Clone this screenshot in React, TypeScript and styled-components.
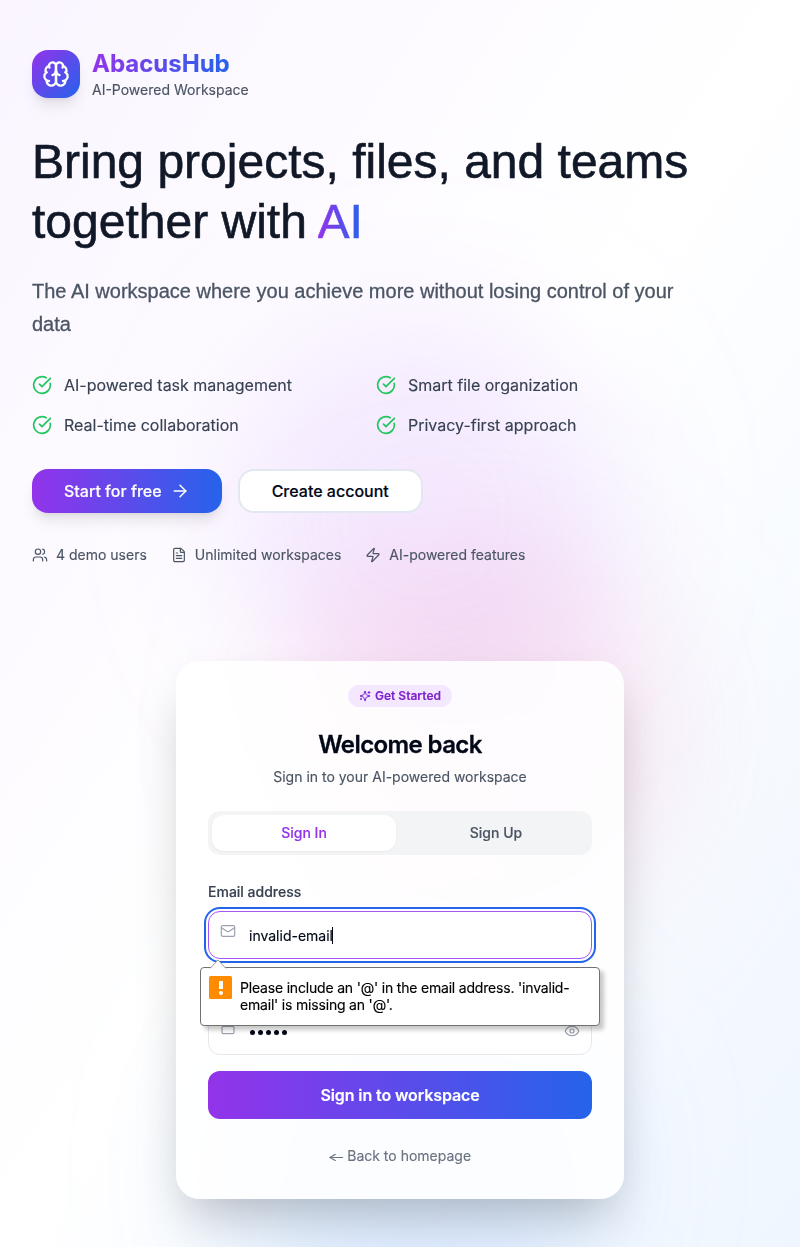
import React from "react";
import styled, { createGlobalStyle, css } from "styled-components";
import { ArrowRight, CircleCheckBig, Eye, FileText, Lock, Mail, Users, Zap } from "lucide-react";

const GlobalStyle = createGlobalStyle`
  *, *::before, *::after { box-sizing: border-box; }
  body {
    margin: 0;
    font-family: Inter, "Liberation Sans", sans-serif;
    color: #020817;
    -webkit-font-smoothing: antialiased;
    -webkit-text-stroke: 0.15px;
  }
  h1, h2, p, ul { margin: 0; padding: 0; }
  button { font: inherit; color: inherit; border: 0; background: none; padding: 0; }
  svg { flex-shrink: 0; display: block; }
`;

const brandGradient = "#9333ea, #2563eb";

const Page = styled.div`
  position: relative;
  isolation: isolate;
  overflow: hidden;
  min-height: 1247px;
  padding: 50px 32px 48px;
  background: linear-gradient(to bottom right, #faf5ff, #ffffff 50%, #eff6ff);
`;

const Glow = styled.div<{ $x: number; $y: number; $color: string; $opacity?: number }>`
  position: absolute;
  z-index: -1;
  left: ${(p) => p.$x}px;
  top: ${(p) => p.$y}px;
  width: 384px;
  height: 384px;
  border-radius: 50%;
  background: ${(p) => p.$color};
  opacity: ${(p) => p.$opacity ?? 0.2};
  filter: blur(64px);
  mix-blend-mode: multiply;
`;

const Brand = styled.div`
  display: flex;
  align-items: center;
  gap: 12px;
  height: 48px;
`;

const BrandMark = styled.div`
  display: grid;
  place-items: center;
  width: 48px;
  height: 48px;
  border-radius: 16px;
  color: #fff;
  background: linear-gradient(to bottom right, ${brandGradient});
  box-shadow: 0 10px 15px -3px rgba(0, 0, 0, 0.1), 0 4px 6px -4px rgba(0, 0, 0, 0.1);
`;

const GradientText = styled.span`
  color: transparent;
  background: linear-gradient(to right, ${brandGradient});
  background-clip: text;
  -webkit-background-clip: text;
`;

const BrandName = styled(GradientText)`
  display: block;
  width: max-content;
  font-size: 24px;
  line-height: 32px;
  font-weight: 700;
`;

const BrandTag = styled.p`
  font-size: 14px;
  line-height: 20px;
  color: #4b5563;
`;

const Headline = styled.h1`
  margin-top: 34px;
  font-family: "Liberation Sans", sans-serif;
  font-size: 48px;
  line-height: 60px;
  font-weight: 400;
  color: #111827;
  -webkit-text-stroke: 0.6px;
`;

const Lead = styled.p`
  margin-top: 23px;
  font-family: "Liberation Sans", sans-serif;
  font-size: 20px;
  line-height: 32.5px;
  color: #4b5563;
  -webkit-text-stroke: 0.3px;
`;

const Features = styled.div`
  display: grid;
  grid-template-columns: 1fr 1fr;
  gap: 16px;
  margin-top: 33px;
  padding-right: 64px;
`;

const Feature = styled.div`
  display: flex;
  align-items: center;
  gap: 12px;
  font-size: 16px;
  line-height: 24px;
  color: #374151;
  svg { color: #22c55e; }
`;

const Actions = styled.div`
  display: flex;
  gap: 16px;
  margin-top: 32px;
`;

const ActionButton = styled.button<{ $primary?: boolean }>`
  display: flex;
  align-items: center;
  gap: 8px;
  height: 44px;
  padding: 0 32px;
  border-radius: 16px;
  font-size: 16px;
  font-weight: 500;
  ${(p) =>
    p.$primary
      ? css`
          color: #fff;
          background: linear-gradient(to right, ${brandGradient});
          box-shadow: 0 10px 15px -3px rgba(0, 0, 0, 0.1), 0 4px 6px -4px rgba(0, 0, 0, 0.1);
        `
      : css`
          background: #fff;
          border: 2px solid #e2e8f0;
        `}
`;

const Stats = styled.div`
  display: flex;
  gap: 24px;
  margin-top: 32px;
`;

const Stat = styled.div`
  display: flex;
  align-items: center;
  gap: 8px;
  font-size: 14px;
  line-height: 20px;
  color: #4b5563;
`;

const Card = styled.section`
  width: 448px;
  height: 538px;
  margin: 96px auto 0;
  padding: 24px 32px;
  border-radius: 24px;
  background: rgba(255, 255, 255, 0.87);
  box-shadow: 0 25px 50px -12px rgba(0, 0, 0, 0.25);
  backdrop-filter: blur(4px);
  display: flex;
  flex-direction: column;
`;

const Badge = styled.span`
  display: flex;
  align-items: center;
  align-self: center;
  gap: 4px;
  height: 22px;
  padding: 0 11px;
  border-radius: 11px;
  font-size: 12px;
  line-height: 16px;
  font-weight: 600;
  color: #7e22ce;
  background: #f3e8ff;
  span { margin-top: -1px; }
`;

const CardTitle = styled.h2`
  margin-top: 22px;
  font-size: 24px;
  line-height: 32px;
  font-weight: 600;
  letter-spacing: -0.6px;
  text-align: center;
  -webkit-text-stroke: 0.3px;
`;

const CardSubtitle = styled.p`
  margin-top: 6px;
  font-size: 14px;
  line-height: 20px;
  text-align: center;
  color: #4b5563;
`;

const Tabs = styled.div`
  display: flex;
  gap: 8px;
  height: 44px;
  margin-top: 24px;
  padding: 4px;
  border-radius: 12px;
  background: #f3f4f6;
`;

const Tab = styled.button<{ $active?: boolean }>`
  flex: 1;
  border-radius: 12px;
  font-size: 14px;
  line-height: 20px;
  font-weight: 500;
  color: ${(p) => (p.$active ? "#9333ea" : "#4b5563")};
  background: ${(p) => (p.$active ? "#fff" : "transparent")};
  box-shadow: ${(p) => (p.$active ? "0 1px 2px rgba(0, 0, 0, 0.05)" : "none")};
`;

const Label = styled.div`
  margin-top: 27px;
  font-size: 14px;
  line-height: 20px;
  font-weight: 500;
  color: #374151;
`;

const Field = styled.div<{ $focused?: boolean }>`
  position: relative;
  display: flex;
  align-items: center;
  gap: 13px;
  height: 48px;
  padding: 0 11px;
  border: 1px solid ${(p) => (p.$focused ? "#a855f7" : "#e5e7eb")};
  border-radius: 12px;
  background: #fff;
  font-size: 14px;
  outline: ${(p) => (p.$focused ? "2px solid #2563eb" : "none")};
  outline-offset: 2px;
  & > svg { color: #9ca3af; align-self: flex-start; margin-top: 11px; }
`;

const EmailField = styled(Field)`
  margin-top: 9px;
`;

const PasswordField = styled(Field)`
  margin-top: 48px;
  & > svg:last-child { margin-left: auto; margin-top: 15px; }
`;

const Typed = styled.span`
  display: flex;
  align-items: center;
  line-height: 20px;
  padding-top: 1px;
`;

const Caret = styled.i`
  width: 1px;
  height: 17px;
  margin-left: -1px;
  background: #020817;
`;

const Dots = styled.span`
  display: flex;
  gap: 3px;
  padding: 3px 0 0 1px;
`;

const Dot = styled.i`
  width: 5px;
  height: 5px;
  border-radius: 50%;
  background: #020817;
`;

const Bubble = styled.div`
  position: absolute;
  z-index: 2;
  left: -9px;
  top: 55px;
  width: 400px;
  height: 59px;
  display: flex;
  gap: 8px;
  padding: 8px;
  border: 1px solid #6f726f;
  border-radius: 4px;
  background: #fff;
  box-shadow: 4px 4px 4px rgba(0, 0, 0, 0.22);
  font-size: 14px;
  line-height: 17px;
  letter-spacing: -0.19px;
  color: #000;
  & > svg { position: absolute; left: 8px; top: -9px; }
  p { padding-top: 3px; white-space: nowrap; }
`;

const Warning = styled.div`
  display: flex;
  flex-direction: column;
  align-items: center;
  justify-content: center;
  gap: 2px;
  width: 23px;
  height: 23px;
  border-radius: 1.5px;
  background: #ff8c00;
  &::before { content: ""; width: 4px; height: 8px; background: #fff; }
  &::after { content: ""; width: 4px; height: 4px; border-radius: 50%; background: #fff; }
`;

const Submit = styled.button`
  height: 48px;
  margin-top: 16px;
  flex-shrink: 0;
  border-radius: 12px;
  font-size: 16px;
  font-weight: 600;
  letter-spacing: -0.1px;
  color: #fff;
  background: linear-gradient(to right, ${brandGradient});
`;

const BackLink = styled.button`
  margin-top: 27px;
  padding-right: 2px;
  font-size: 14px;
  line-height: 20px;
  text-align: center;
  color: #6b7280;
`;

const BackArrow = styled.span`
  display: inline-block;
  margin-right: 3px;
  transform: translateY(1px) scale(1.38, 0.8);
  transform-origin: left center;
`;

const BrainIcon = () => (
  <svg width="28" height="28" viewBox="0 0 24 24" fill="none" stroke="currentColor" strokeWidth="2" strokeLinecap="round" strokeLinejoin="round">
    <path d="M12 5a3 3 0 1 0-5.997.125 4 4 0 0 0-2.526 5.77 4 4 0 0 0 .556 6.588A4 4 0 1 0 12 18Z" />
    <path d="M12 5a3 3 0 1 1 5.997.125 4 4 0 0 1 2.526 5.77 4 4 0 0 1-.556 6.588A4 4 0 1 1 12 18Z" />
    <path d="M15 13a4.5 4.5 0 0 1-3-4 4.5 4.5 0 0 1-3 4" />
    <path d="M17.599 6.5a3 3 0 0 0 .399-1.375M6.003 5.125A3 3 0 0 0 6.401 6.5" />
    <path d="M3.477 10.896a4 4 0 0 1 .585-.396M19.938 10.5a4 4 0 0 1 .585.396" />
    <path d="M6 18a4 4 0 0 1-1.967-.516M19.967 17.484A4 4 0 0 1 18 18" />
  </svg>
);

const SparklesIcon = () => (
  <svg width="12" height="12" viewBox="0 0 24 24" fill="none" stroke="currentColor" strokeWidth="2" strokeLinecap="round" strokeLinejoin="round">
    <path d="M9.937 15.5A2 2 0 0 0 8.5 14.063l-6.135-1.582a.5.5 0 0 1 0-.962L8.5 9.936A2 2 0 0 0 9.937 8.5l1.582-6.135a.5.5 0 0 1 .963 0L14.063 8.5A2 2 0 0 0 15.5 9.937l6.135 1.581a.5.5 0 0 1 0 .964L15.5 14.063a2 2 0 0 0-1.437 1.437l-1.582 6.135a.5.5 0 0 1-.963 0z" />
    <path d="M20 3v4M22 5h-4M4 17v2M5 18H3" />
  </svg>
);

const features = [
  "AI-powered task management",
  "Smart file organization",
  "Real-time collaboration",
  "Privacy-first approach",
];

export default function App() {
  return (
    <>
      <GlobalStyle />
      <Page>
        <Glow $x={232} $y={322} $color="#c084fc" $opacity={0.16} />
        <Glow $x={286} $y={540} $color="#f472b6" $opacity={0.16} />
        <Glow $x={216} $y={980} $color="#60a5fa" $opacity={0.16} />

        <Brand>
          <BrandMark><BrainIcon /></BrandMark>
          <div>
            <BrandName>AbacusHub</BrandName>
            <BrandTag>AI-Powered Workspace</BrandTag>
          </div>
        </Brand>
        <Headline>
          Bring projects, files, and teams<br />
          together with <GradientText>AI</GradientText>
        </Headline>
        <Lead>
          The AI workspace where you achieve more without losing control of your<br />
          data
        </Lead>
        <Features>
          {features.map((text) => (
            <Feature key={text}><CircleCheckBig size={20} />{text}</Feature>
          ))}
        </Features>
        <Actions>
          <ActionButton $primary>Start for free <ArrowRight size={20} strokeWidth={1.8} /></ActionButton>
          <ActionButton>Create account</ActionButton>
        </Actions>
        <Stats>
          <Stat><Users size={16} strokeWidth={1.8} />4 demo users</Stat>
          <Stat><FileText size={16} strokeWidth={1.8} />Unlimited workspaces</Stat>
          <Stat><Zap size={16} strokeWidth={1.8} />AI-powered features</Stat>
        </Stats>

        <Card>
          <Badge><SparklesIcon /><span>Get Started</span></Badge>
          <CardTitle>Welcome back</CardTitle>
          <CardSubtitle>Sign in to your AI-powered workspace</CardSubtitle>
          <Tabs>
            <Tab $active>Sign In</Tab>
            <Tab>Sign Up</Tab>
          </Tabs>
          <Label>Email address</Label>
          <EmailField $focused>
            <Mail size={16} strokeWidth={1.8} />
            <Typed>invalid-email<Caret /></Typed>
            <Bubble role="alert">
              <svg width="18" height="10" viewBox="0 0 18 10">
                <path d="M1 9.5 9 1l8 8.5" fill="#fff" stroke="#9a9a9a" />
                <path d="M1 10h16" stroke="#fff" />
              </svg>
              <Warning />
              <p>
                Please include an '@' in the email address. 'invalid-<br />
                email' is missing an '@'.
              </p>
            </Bubble>
          </EmailField>
          <PasswordField>
            <Lock size={16} strokeWidth={1.8} />
            <Dots><Dot /><Dot /><Dot /><Dot /><Dot /></Dots>
            <Eye size={16} strokeWidth={1.8} />
          </PasswordField>
          <Submit>Sign in to workspace</Submit>
          <BackLink><BackArrow>←</BackArrow> Back to homepage</BackLink>
        </Card>
      </Page>
    </>
  );
}
